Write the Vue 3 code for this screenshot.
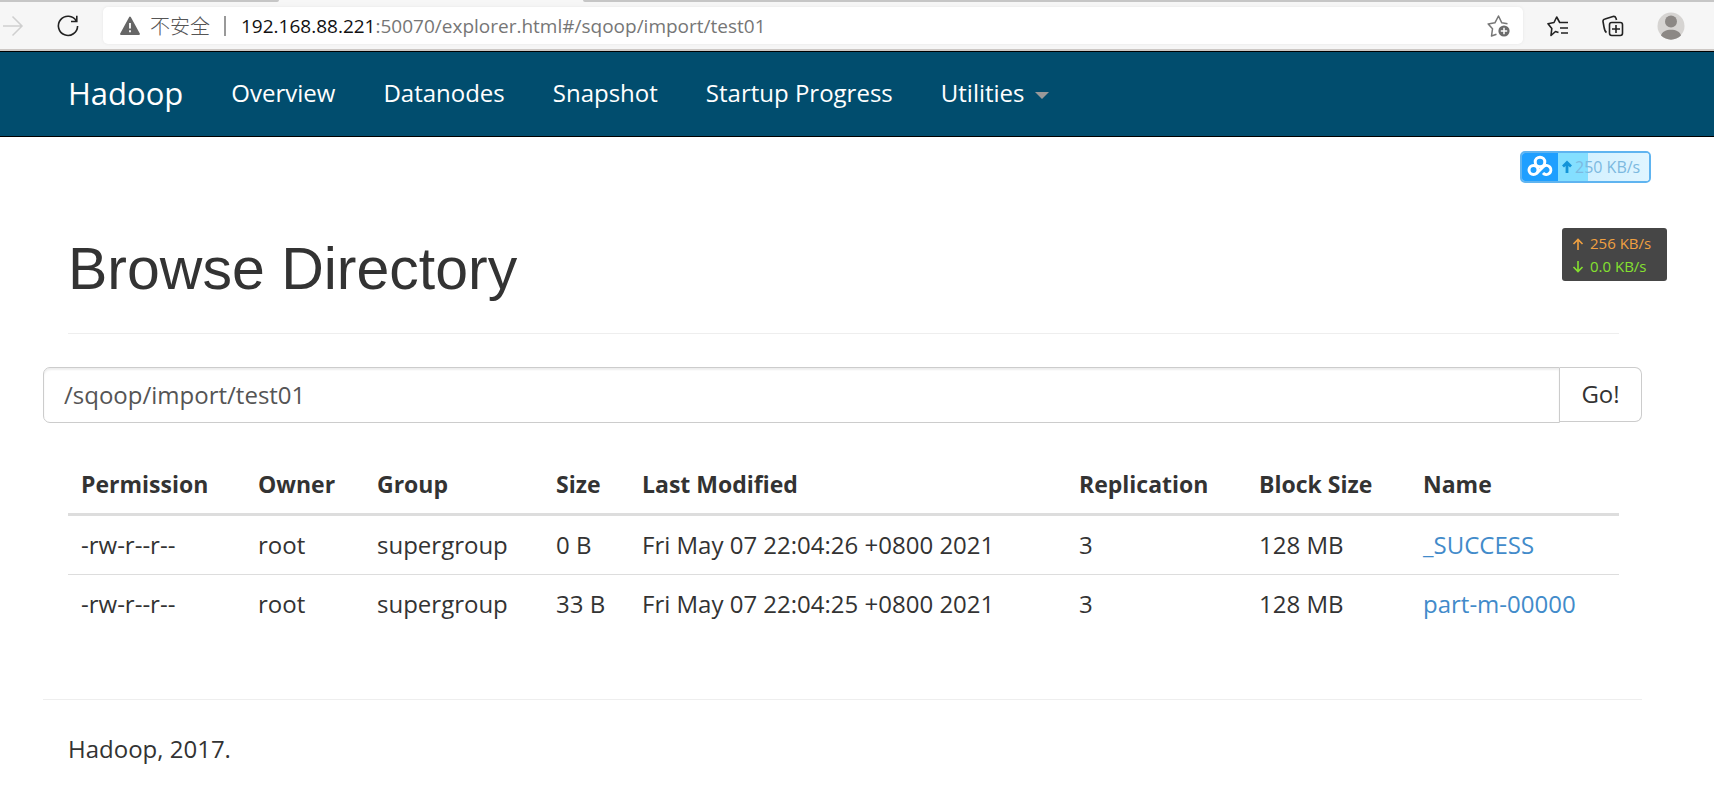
<script setup>
import { ref } from 'vue'

const links = ['Overview', 'Datanodes', 'Snapshot', 'Startup Progress']
const path = ref('/sqoop/import/test01')
const files = [
  { permission: '-rw-r--r--', owner: 'root', group: 'supergroup', size: '0 B', modified: 'Fri May 07 22:04:26 +0800 2021', replication: 3, block: '128 MB', name: '_SUCCESS' },
  { permission: '-rw-r--r--', owner: 'root', group: 'supergroup', size: '33 B', modified: 'Fri May 07 22:04:25 +0800 2021', replication: 3, block: '128 MB', name: 'part-m-00000' }
]
</script>

<template>
  <div class="window">
    <div class="tabs"><span class="tab-left"></span><span class="tab-active"></span><span class="tab-right"></span></div>
    <header class="toolbar">
      <button class="tool forward" aria-label="Forward">
        <svg width="24" height="24" viewBox="0 0 24 24" fill="none" stroke="#cfcfcf" stroke-width="1.5"><path d="M3 12H22M12.500 2.500L22 12l-9.500 9.500" /></svg>
      </button>
      <button class="tool refresh" aria-label="Refresh">
        <svg width="24" height="24" viewBox="0 0 24 24" fill="none" stroke="#222" stroke-width="1.600"><path d="M20.300 7A9.600 9.600 0 1 0 21.600 12M20.800 1.800V7.500H15" /></svg>
      </button>
      <div class="address">
        <svg class="warn" width="20" height="20" viewBox="0 0 20 20"><path d="M10 1.500L19 18H1z" fill="#666" stroke="#666" stroke-width="1.800" stroke-linejoin="round" /><path d="M10 7v5.500M10 14.300v2" stroke="#fff" stroke-width="1.800" /></svg>
        <span class="insecure">不安全</span>
        <span class="divider"></span>
        <span class="url"><span class="host">192.168.88.221</span>:50070/explorer.html#/sqoop/import/test01</span>
        <button class="tool star" aria-label="Add to favorites">
          <svg width="24" height="24" viewBox="0 0 24 24" fill="none"><path d="M9.500 20.200L4.500 22l1-7.200L1.200 9.900l6.700-1.100L11.500 2l3.300 6.800 5.700.9" stroke="#777" stroke-width="1.500" stroke-linejoin="round" /><circle cx="17" cy="17" r="5.600" fill="#6b6b6b" /><path d="M17 13.800v6.400M13.800 17h6.400" stroke="#fff" stroke-width="1.500" /></svg>
        </button>
      </div>
      <button class="tool favorites" aria-label="Favorites">
        <svg width="24" height="24" viewBox="0 0 24 24" fill="none" stroke="#222" stroke-width="1.600" stroke-linejoin="round"><path d="M12.500 18.500L9.500 17.500 5 21.500l.8-7L2 9.700l6-1.200L10.700 3l3 5.500H22M14 14h8M15 19h7" /></svg>
      </button>
      <button class="tool collections" aria-label="Collections">
        <svg width="24" height="24" viewBox="0 0 24 24" fill="none" stroke="#222" stroke-width="1.600" stroke-linejoin="round"><rect x="8.500" y="8.500" width="13" height="13" rx="2.200" /><path d="M15 11v8M11 15h8M5.500 18.500C3.800 17.500 3.500 16 3 13L2 7.500Q1.800 5.500 4 5L12 2.500Q14.200 2 15 4.200L15.500 6" /></svg>
      </button>
      <button class="tool profile" aria-label="Profile">
        <svg width="28" height="28" viewBox="0 0 28 28"><circle cx="14" cy="14" r="13.500" fill="#d6d4d2" /><circle cx="14" cy="9.500" r="6" fill="#8c8885" /><path d="M4 23.500C5.500 15.800 22.500 15.800 24 23.500 18.500 29 9.500 29 4 23.500z" fill="#8c8885" /></svg>
      </button>
    </header>

    <nav class="navbar">
      <a class="brand" href="#">Hadoop</a>
      <a v-for="link in links" :key="link" class="link" href="#">{{ link }}</a>
      <a class="link" href="#">Utilities<span class="caret"></span></a>
    </nav>

    <main class="container">
      <h1 class="title">Browse Directory</h1>
      <form class="path-form" @submit.prevent>
        <input v-model="path" class="path" type="text" aria-label="Directory path">
        <button class="go" type="submit">Go!</button>
      </form>
      <div class="table-wrap">
        <table class="files">
          <colgroup>
            <col class="c-permission"><col class="c-owner"><col class="c-group"><col class="c-size"><col><col class="c-replication"><col class="c-block"><col class="c-name">
          </colgroup>
          <thead>
            <tr><th>Permission</th><th>Owner</th><th>Group</th><th>Size</th><th>Last Modified</th><th>Replication</th><th>Block Size</th><th>Name</th></tr>
          </thead>
          <tbody>
            <tr v-for="file in files" :key="file.name">
              <td>{{ file.permission }}</td>
              <td>{{ file.owner }}</td>
              <td>{{ file.group }}</td>
              <td>{{ file.size }}</td>
              <td>{{ file.modified }}</td>
              <td>{{ file.replication }}</td>
              <td>{{ file.block }}</td>
              <td><a href="#">{{ file.name }}</a></td>
            </tr>
          </tbody>
        </table>
      </div>
      <footer class="footer">Hadoop, 2017.</footer>
    </main>

    <div class="upload-badge">
      <span class="cloud">
        <svg width="26" height="24" viewBox="0 0 26 24" fill="none" stroke="#fff" stroke-width="3"><circle cx="13" cy="7" r="4.800" /><circle cx="6.500" cy="15" r="4.500" /><path d="M9.500 18.500L16.500 11.500A4.500 4.500 0 1 1 16 18" /></svg>
      </span>
      <span class="rate">
        <svg width="10" height="14" viewBox="0 0 10 14" fill="none" stroke="#1494d8" stroke-width="2.800"><path d="M5 13V3M1 6.500l4-4 4 4" /></svg>
        <span>250 KB/s</span>
      </span>
    </div>
    <div class="net-meter">
      <span class="up"><svg width="12" height="12" viewBox="0 0 12 12" fill="none" stroke="currentColor" stroke-width="1.600"><path d="M6 12V1.500M1.500 6L6 1.500 10.500 6" /></svg>256 KB/s</span>
      <span class="down"><svg width="12" height="12" viewBox="0 0 12 12" fill="none" stroke="currentColor" stroke-width="1.600"><path d="M6 0v10.500M1.500 6L6 10.500 10.500 6" /></svg>0.0 KB/s</span>
    </div>
  </div>
</template>

<style>
body { margin: 0; background: #fff; }
</style>

<style scoped>
.window {
  position: relative;
  color: #333;
  font-family: "Open Sans", "Noto Sans CJK SC", sans-serif;
  font-size: 24px;
  line-height: 32px;
}
.window * { box-sizing: border-box; }
a { color: #428bca; text-decoration: none; }
button, input { font: inherit; color: inherit; }

.tabs { display: flex; height: 2px; background: #f7f7f7; }
.tab-left { width: 279px; background: #c6c6c6; border-bottom-right-radius: 2px; }
.tab-active { width: 304px; }
.tab-right { flex: 1; background: #c6c6c6; border-bottom-left-radius: 2px; }

.toolbar {
  display: flex;
  align-items: center;
  height: 49px;
  padding: 0 29px 0 0;
  background: #f6f6f6;
  border-bottom: 2px solid #cdc8c5;
}
.tool { display: flex; flex: none; padding: 0; border: 0; background: none; }
.refresh { margin: 0 23px 0 32px; }
.address {
  display: flex;
  flex: 1;
  align-items: center;
  height: 37px;
  padding: 0 12px 0 17px;
  border-radius: 5px;
  background: #fff;
  box-shadow: 0 0 3px #e6e6e6;
  font-size: 19px;
  white-space: nowrap;
}
.insecure { margin-left: 10px; font-family: "Noto Sans CJK SC", sans-serif; font-size: 20px; font-weight: 300; color: #555; }
.divider { width: 2px; height: 20px; margin: 0 15px 0 14px; background: #999; }
.url { flex: 1; color: #767676; }
.host { color: #111; }
.favorites { margin-left: 23px; }
.collections { margin-left: 31px; }
.profile { margin-left: 32px; }

.navbar {
  display: flex;
  align-items: center;
  height: 86px;
  padding: 0 68px 2px;
  gap: 48px;
  border: solid #000;
  border-width: 1px 0;
  background: #014d6e;
  white-space: nowrap;
}
.navbar a { color: #fff; }
.brand { font-size: 31px; }
.caret {
  display: inline-block;
  margin-left: 10px;
  vertical-align: middle;
  border: 7px solid transparent;
  border-top-color: #999;
  border-bottom: 0;
}

.container { padding: 98px 72px 0 43px; }
.title {
  margin: 0 23px 33px 25px;
  padding-bottom: 30px;
  border-bottom: 1px solid #eee;
  font-family: "Liberation Sans", Arial, sans-serif;
  font-size: 59px;
  font-weight: 400;
  line-height: 68px;
}
.path-form { display: flex; align-items: flex-start; }
.path {
  flex: 1;
  min-width: 0;
  height: 56px;
  padding: 0 20px 2px;
  border: 1px solid #ccc;
  border-radius: 7px 0 0 7px;
  background: #fff;
  color: #555;
  box-shadow: inset 0 2px 2px #eee;
}
.go {
  width: 82px;
  height: 55px;
  padding: 0 0 2px;
  border: 1px solid #ccc;
  border-left: 0;
  border-radius: 0 7px 7px 0;
  background: #fff;
}
.table-wrap { margin: 33px 23px 0 25px; }
.files { width: 100%; table-layout: fixed; border-collapse: separate; border-spacing: 0; white-space: nowrap; }
.files th, .files td { padding: 13px 0 13px 13px; text-align: left; }
.files th { padding-top: 12px; border-bottom: 3px solid #ddd; font-size: 23px; font-weight: 700; }
.files tr + tr td { border-top: 1px solid #ddd; }
.c-permission { width: 177px; }
.c-owner { width: 119px; }
.c-group { width: 179px; }
.c-size { width: 86px; }
.c-replication { width: 180px; }
.c-block { width: 164px; }
.c-name { width: 209px; }
.footer { margin-top: 66px; padding: 33px 25px; border-top: 1px solid #eee; }

.upload-badge {
  position: absolute;
  top: 151px;
  right: 63px;
  display: flex;
  width: 131px;
  height: 32px;
  overflow: hidden;
  border: 2px solid #5fb4f0;
  border-radius: 5px;
  font-size: 16px;
}
.cloud { display: flex; align-items: center; justify-content: center; width: 36px; background: #1e9fff; }
.rate {
  display: flex;
  flex: 1;
  align-items: center;
  gap: 3px;
  padding-left: 4px;
  background: linear-gradient(to right, #84dfff 30px, #d4f1ff 30px, #e0f5ff);
  color: #7cb9df;
  white-space: nowrap;
}
.net-meter {
  position: absolute;
  top: 228px;
  right: 47px;
  display: grid;
  width: 105px;
  padding: 4px 10px 3px;
  border-radius: 3px;
  background: #464646;
  font-size: 15px;
  line-height: 23px;
  white-space: nowrap;
}
.net-meter span { display: flex; align-items: center; gap: 6px; }
.net-meter .up { color: #f0a040; }
.net-meter .down { color: #85e02f; }
</style>
